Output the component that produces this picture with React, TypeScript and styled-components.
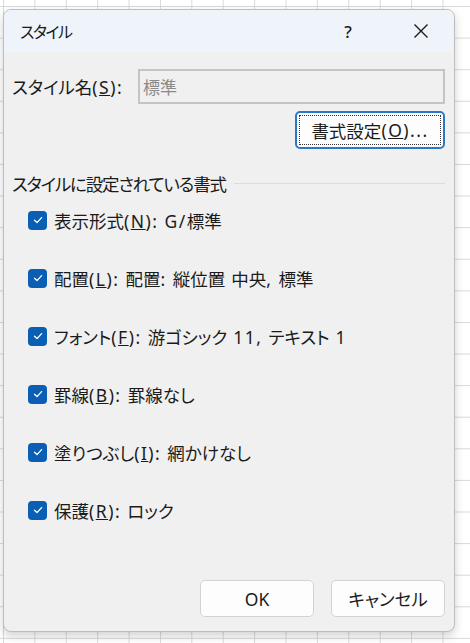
import styled, { createGlobalStyle } from 'styled-components';

const GlobalStyle = createGlobalStyle`
  html, body {
    margin: 0;
    padding: 0;
  }
  body {
    width: 470px;
    height: 643px;
    overflow: hidden;
    background-color: #ffffff;
    background-image:
      linear-gradient(to right, #d9d9d9 1px, transparent 1px),
      linear-gradient(to bottom, #d9d9d9 1px, transparent 1px);
    background-size: 31.4px 31.6px;
    background-position: 3px 6px;
    font-family: "Noto Sans", "Noto Sans CJK JP", sans-serif;
    font-feature-settings: "palt";
    color: #1b1b1b;
  }
`;

const Dialog = styled.div`
  margin: 9px 0 0 3px;
  width: 452px;
  height: 623px;
  box-sizing: border-box;
  border: 1px solid #bdbdbd;
  border-radius: 8px;
  background: #f0f0f0;
  box-shadow: 0 4px 10px rgba(0, 0, 0, 0.18);
  display: flex;
  flex-direction: column;
  overflow: hidden;
`;

const TitleBar = styled.div`
  height: 42px;
  background: #eef4f9;
  display: flex;
  align-items: center;
  padding: 0 0 0 16px;
  font-size: 16px;
`;

const TitleText = styled.div`
  flex: 1;
  letter-spacing: -1.5px;
`;

const TitleButton = styled.div<{ $w: number }>`
  width: ${(p) => p.$w}px;
  height: 42px;
  display: flex;
  align-items: center;
  justify-content: center;
  font-size: 17px;
  font-weight: 500;
`;

const Body = styled.div`
  flex: 1;
  display: flex;
  flex-direction: column;
  padding: 17px 9px 14px 8px;
`;

const NameRow = styled.div`
  display: flex;
  align-items: center;
`;

const Label = styled.div`
  width: 126px;
  font-size: 17.5px;
`;

const NameInput = styled.div`
  flex: 1;
  height: 35px;
  box-sizing: border-box;
  border: 2px solid #c4c4c4;
  background: #f0f0f0;
  color: #8a8a8a;
  font-size: 17px;
  display: flex;
  align-items: center;
  padding-left: 3px;
`;

const FormatRow = styled.div`
  display: flex;
  justify-content: flex-end;
  margin-top: 7px;
`;

const FocusButton = styled.div`
  width: 150px;
  height: 38px;
  box-sizing: border-box;
  border: 2px solid #2a78c8;
  border-radius: 5px;
  background: #fdfdfd;
  padding: 2px;
`;

const FocusInner = styled.div`
  height: 100%;
  box-sizing: border-box;
  border: 1px dotted #333;
  display: flex;
  align-items: center;
  justify-content: center;
  font-size: 17.5px;
`;

const SectionHeader = styled.div`
  display: flex;
  align-items: center;
  gap: 8px;
  margin-top: 22px;
  font-size: 17.5px;
`;

const SectionTitle = styled.span`
  letter-spacing: -1.2px;
`;

const SectionLine = styled.div`
  flex: 1;
  height: 1px;
  background: #dcdcdc;
`;

const List = styled.div`
  display: flex;
  flex-direction: column;
  padding-left: 16px;
  margin-top: -5px;
`;

const Item = styled.div`
  height: 58px;
  display: flex;
  align-items: center;
  gap: 7px;
  font-size: 17.5px;
  white-space: pre;
`;

const Latin = styled.span`
  letter-spacing: 1.5px;
`;

const Box = styled.div`
  width: 19px;
  height: 19px;
  border-radius: 4px;
  background: #0a5fb4;
  display: flex;
  align-items: center;
  justify-content: center;
  flex: none;
`;

const Footer = styled.div`
  margin-top: auto;
  display: flex;
  justify-content: flex-end;
  gap: 17px;
`;

const PushButton = styled.div`
  width: 114px;
  height: 37px;
  box-sizing: border-box;
  border: 1px solid #d3d3d3;
  border-radius: 5px;
  background: #fdfdfd;
  display: flex;
  align-items: center;
  justify-content: center;
  font-size: 17.5px;
`;

const Check = () => (
  <Box>
    <svg width="12" height="12" viewBox="0 0 12 12">
      <path d="M2.5 6.3 L5 8.6 L9.6 3.6" fill="none" stroke="#fff" strokeWidth="1.3" strokeLinecap="round" strokeLinejoin="round" />
    </svg>
  </Box>
);

// wrap ascii runs so they get a bit of extra tracking
const mixed = (s: string) =>
  s.split(/([\x20-\x7e]+)/).map((part, i) =>
    /^[\x20-\x7e]+$/.test(part) ? <Latin key={i}>{part}</Latin> : part
  );

const items: { name: string; key: string; value: string }[] = [
  { name: '表示形式', key: 'N', value: 'G/標準' },
  { name: '配置', key: 'L', value: '配置: 縦位置 中央, 標準' },
  { name: 'フォント', key: 'F', value: '游ゴシック 11, テキスト 1' },
  { name: '罫線', key: 'B', value: '罫線なし' },
  { name: '塗りつぶし', key: 'I', value: '網かけなし' },
  { name: '保護', key: 'R', value: 'ロック' },
];

export default function App() {
  return (
    <>
      <GlobalStyle />
      <Dialog>
        <TitleBar>
          <TitleText>スタイル</TitleText>
          <TitleButton $w={80}>?</TitleButton>
          <TitleButton $w={66}>
            <svg width="16" height="16" viewBox="0 0 16 16">
              <path d="M1.5 1.5 L14.5 14.5 M14.5 1.5 L1.5 14.5" stroke="#1b1b1b" strokeWidth="1.4" />
            </svg>
          </TitleButton>
        </TitleBar>
        <Body>
          <NameRow>
            <Label>
              スタイル名<Latin>(<u>S</u>):</Latin>
            </Label>
            <NameInput>標準</NameInput>
          </NameRow>
          <FormatRow>
            <FocusButton>
              <FocusInner>
                書式設定<Latin>(<u>O</u>)...</Latin>
              </FocusInner>
            </FocusButton>
          </FormatRow>
          <SectionHeader>
            <SectionTitle>スタイルに設定されている書式</SectionTitle>
            <SectionLine />
          </SectionHeader>
          <List>
            {items.map((it) => (
              <Item key={it.key}>
                <Check />
                <span>
                  {it.name}
                  <Latin>
                    (<u>{it.key}</u>):{' '}
                  </Latin>
                  {mixed(it.value)}
                </span>
              </Item>
            ))}
          </List>
          <Footer>
            <PushButton>OK</PushButton>
            <PushButton>キャンセル</PushButton>
          </Footer>
        </Body>
      </Dialog>
    </>
  );
}
